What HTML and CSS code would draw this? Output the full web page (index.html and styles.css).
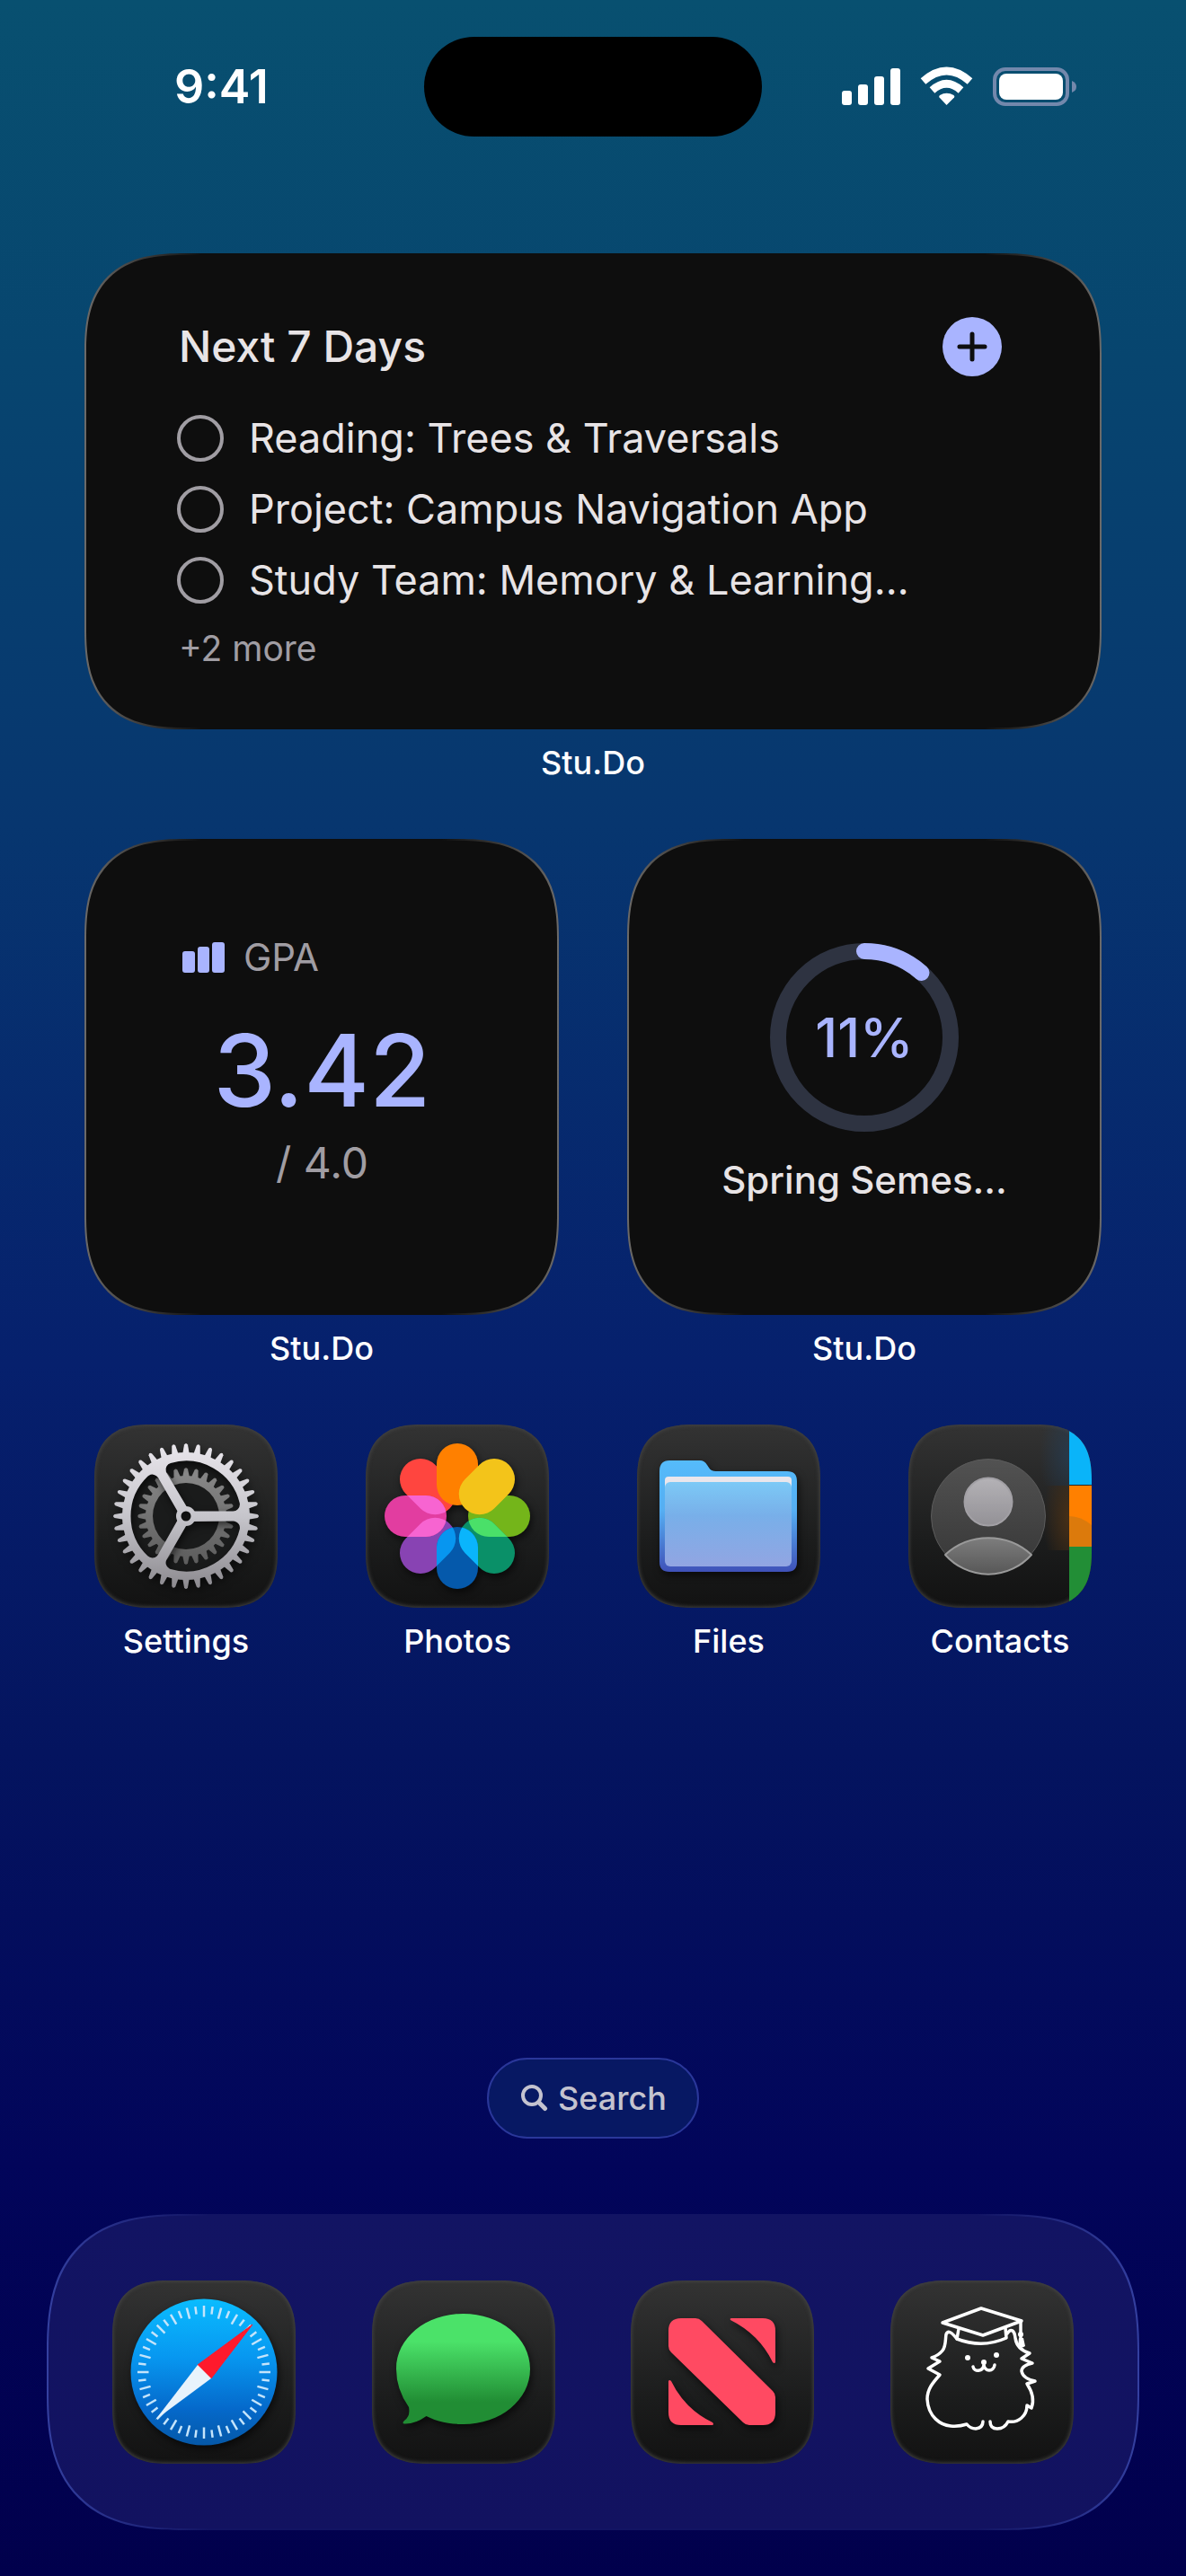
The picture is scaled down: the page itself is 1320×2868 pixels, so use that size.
FILE: index.html
```html
<!DOCTYPE html>
<html lang="en">
<head>
<meta charset="utf-8">
<meta name="viewport" content="width=device-width, initial-scale=1">
<title>Home Screen</title>
<link rel="stylesheet" href="styles.css">
</head>
<body>
<div class="screen">
  <header class="status">
    <time class="status-time">9:41</time>
    <div class="island"></div>
    <svg class="status-icons" width="264" height="46" viewBox="0 0 264 46" role="img" aria-label="Signal, Wi-Fi, battery">
      <g fill="#fff">
        <rect x="1" y="27" width="11" height="16" rx="3"/>
        <rect x="19" y="20" width="11" height="23" rx="3"/>
        <rect x="37" y="11" width="11" height="32" rx="3"/>
        <rect x="55" y="2" width="11" height="41" rx="3"/>
        <path d="M117.500 43 L109.500 34.500 Q108.500 33 110 32 Q117.500 27.500 125.500 32 Q127 33 126 34.500 Z"/>
        <rect x="176" y="8" width="71" height="29" rx="8"/>
      </g>
      <g fill="none" stroke="#fff" stroke-width="8.500">
        <path d="M91.500 16.500 Q117.500 -6.500 143.500 16.500"/>
        <path d="M101.500 26.500 Q117.500 12 133.500 26.500"/>
      </g>
      <rect x="171" y="3" width="81" height="39" rx="12" fill="none" stroke="#7388ac" stroke-width="4"/>
      <path d="M257 16 Q262 18 262 22.500 Q262 27 257 29 Z" fill="#7388ac"/>
    </svg>
  </header>

  <main class="home">
    <section class="tile wide">
      <div class="widget agenda">
        <div class="agenda-head">
          <h2>Next 7 Days</h2>
          <button class="add" type="button" aria-label="Add task">
            <svg width="66" height="66" viewBox="0 0 66 66"><path d="M33 19V47M19 33H47" stroke="#0e0e0e" stroke-width="5" stroke-linecap="round"/></svg>
          </button>
        </div>
        <ul class="tasks">
          <li><label><input type="checkbox"><span>Reading: Trees &amp; Traversals</span></label></li>
          <li><label><input type="checkbox"><span>Project: Campus Navigation App</span></label></li>
          <li><label><input type="checkbox"><span>Study Team: Memory &amp; Learning…</span></label></li>
        </ul>
        <p class="more">+2 more</p>
      </div>
      <p class="caption">Stu.Do</p>
    </section>

    <section class="tile half">
      <div class="widget gpa">
        <div class="gpa-head">
          <svg width="48" height="34" viewBox="0 0 48 34" fill="#a9b4ff"><rect y="10" width="14" height="24" rx="3"/><rect x="17" y="5" width="13" height="29" rx="3"/><rect x="33" width="14" height="34" rx="3"/></svg>
          <h2>GPA</h2>
        </div>
        <p class="gpa-value">3.42</p>
        <p class="gpa-scale">/ 4.0</p>
      </div>
      <p class="caption">Stu.Do</p>
    </section>

    <section class="tile half">
      <div class="widget term">
        <div class="ring">
          <svg width="210" height="210" viewBox="0 0 210 210" fill="none" stroke-width="18">
            <circle cx="105" cy="105" r="96" stroke="#2e3341"/>
            <circle cx="105" cy="105" r="96" stroke="#a9b4ff" stroke-linecap="round" pathLength="1000" stroke-dasharray="115 885" transform="rotate(-90 105 105)"/>
          </svg>
          <span class="ring-value">11%</span>
        </div>
        <h2>Spring Semes...</h2>
      </div>
      <p class="caption">Stu.Do</p>
    </section>

    <a class="tile app" href="#settings">
      <svg class="icon" viewBox="0 0 204 204">
        <defs>
          <linearGradient id="steel" gradientUnits="userSpaceOnUse" x1="0" y1="-81" x2="0" y2="81"><stop offset="0" stop-color="#e9e6ec"/><stop offset=".5" stop-color="#c6c5cb"/><stop offset="1" stop-color="#8b898e"/></linearGradient>
          <linearGradient id="iron" gradientUnits="userSpaceOnUse" x1="0" y1="-54" x2="0" y2="54"><stop offset="0" stop-color="#8a8a8a"/><stop offset="1" stop-color="#5c5c5c"/></linearGradient>
          <path id="tooth" d="M-4 -68L-2 -79.500Q0 -82.500 2 -79.500L4 -68Z"/>
          <g id="teeth3"><use href="#tooth"/><use href="#tooth" transform="rotate(10)"/><use href="#tooth" transform="rotate(20)"/></g>
          <g id="teeth9"><use href="#teeth3"/><use href="#teeth3" transform="rotate(30)"/><use href="#teeth3" transform="rotate(60)"/></g>
          <path id="cog" d="M-4 -43L-2 -52.500Q0 -55 2 -52.500L4 -43Z"/>
          <g id="cogs7"><use href="#cog"/><use href="#cog" transform="rotate(12.860)"/><use href="#cog" transform="rotate(25.710)"/><use href="#cog" transform="rotate(38.570)"/><use href="#cog" transform="rotate(51.430)"/><use href="#cog" transform="rotate(64.290)"/><use href="#cog" transform="rotate(77.140)"/></g>
          <path id="opening" d="M8 -13L52.400 -13A54 54 0 0 0 -15 -51.900Z"/>
          <mask id="wheel" maskUnits="userSpaceOnUse" x="-90" y="-90" width="180" height="180">
            <g fill="#fff"><circle r="71"/><use href="#teeth9"/><use href="#teeth9" transform="rotate(90)"/><use href="#teeth9" transform="rotate(180)"/><use href="#teeth9" transform="rotate(270)"/></g>
            <g stroke="#000" stroke-width="15" stroke-linejoin="round"><use href="#opening"/><use href="#opening" transform="rotate(120)"/><use href="#opening" transform="rotate(240)"/></g>
            <circle r="11" fill="#fff"/><circle r="5.500"/>
          </mask>
          <mask id="pinion" maskUnits="userSpaceOnUse" x="-60" y="-60" width="120" height="120">
            <g fill="#fff"><circle r="45"/><use href="#cogs7"/><use href="#cogs7" transform="rotate(90)"/><use href="#cogs7" transform="rotate(180)"/><use href="#cogs7" transform="rotate(270)"/></g>
            <circle r="37"/>
          </mask>
        </defs>
        <g transform="translate(102 102)">
          <circle r="63" fill="#1a1b1b"/>
          <rect x="-60" y="-60" width="120" height="120" fill="url(#iron)" mask="url(#pinion)"/>
          <g class="lifted"><rect x="-90" y="-90" width="180" height="180" fill="url(#steel)" mask="url(#wheel)"/></g>
        </g>
      </svg>
      <span class="caption">Settings</span>
    </a>

    <a class="tile app" href="#photos">
      <svg class="icon" viewBox="0 0 204 204">
        <defs>
          <rect id="petal" x="-23" y="-81" width="46" height="69" rx="23"/>
          <clipPath id="clip-teal"><use href="#petal" transform="rotate(135)"/></clipPath>
          <clipPath id="clip-purple"><use href="#petal" transform="rotate(225)"/></clipPath>
          <clipPath id="clip-pink"><use href="#petal" transform="rotate(270)"/></clipPath>
        </defs>
        <g transform="translate(102 102)">
          <g class="lifted">
            <use href="#petal" transform="rotate(315)" fill="#ff453f"/>
            <use href="#petal" transform="rotate(90)" fill="#74b51a"/>
            <use href="#petal" transform="rotate(135)" fill="#0a9068"/>
            <use href="#petal" transform="rotate(225)" fill="#8843b3"/>
            <use href="#petal" transform="rotate(180)" fill="#0559ab"/>
            <use href="#petal" transform="rotate(270)" fill="#e23da0"/>
            <use href="#petal" fill="#ff8000"/>
            <use href="#petal" transform="rotate(45)" fill="#f3c41a"/>
          </g>
          <g clip-path="url(#clip-teal)"><use href="#petal" transform="rotate(90)" fill="#4ae069"/><use href="#petal" transform="rotate(180)" fill="#0ab5fc"/></g>
          <g clip-path="url(#clip-purple)"><use href="#petal" transform="rotate(180)" fill="#0796f0"/><use href="#petal" transform="rotate(270)" fill="#f764d1"/></g>
          <g clip-path="url(#clip-pink)"><use href="#petal" transform="rotate(315)" fill="#f764d1"/></g>
        </g>
      </svg>
      <span class="caption">Photos</span>
    </a>

    <a class="tile app" href="#files">
      <svg class="icon" viewBox="0 0 204 204">
        <defs>
          <linearGradient id="folder-back" x2="0" y2="1"><stop offset="0" stop-color="#55bbfb"/><stop offset=".45" stop-color="#55aef2"/><stop offset="1" stop-color="#3f51b8"/></linearGradient>
          <linearGradient id="folder-front" x2="0" y2="1"><stop offset="0" stop-color="#7cc9f6"/><stop offset=".4" stop-color="#78afe9"/><stop offset="1" stop-color="#92a5e2"/></linearGradient>
        </defs>
        <path class="lifted" d="M25 52Q25 40 36 40H70Q75 40 78 45L80 48Q82 52 88 52H167Q178 52 178 63V153Q178 164 167 164H36Q25 164 25 153Z" fill="url(#folder-back)"/>
        <rect x="31" y="58" width="141" height="14" rx="4" fill="#eae6ec"/>
        <rect x="31" y="64" width="141" height="94" rx="6" fill="url(#folder-front)"/>
      </svg>
      <span class="caption">Files</span>
    </a>

    <a class="tile app" href="#contacts">
      <svg class="icon" viewBox="0 0 204 204">
        <defs>
          <linearGradient id="disc" x2="0" y2="1"><stop offset="0" stop-color="#525252"/><stop offset="1" stop-color="#363636"/></linearGradient>
          <linearGradient id="head" x2="0" y2="1"><stop offset="0" stop-color="#b4b2b6"/><stop offset="1" stop-color="#939196"/></linearGradient>
          <linearGradient id="bust" x2="0" y2="1"><stop offset="0" stop-color="#7d7d7d"/><stop offset="1" stop-color="#575757"/></linearGradient>
          <radialGradient id="glow-blue" cx="1" cy=".5" r="1"><stop offset="0" stop-color="#24405c" stop-opacity=".6"/><stop offset="1" stop-color="#24405c" stop-opacity="0"/></radialGradient>
          <radialGradient id="glow-orange" cx="1" cy=".5" r="1"><stop offset="0" stop-color="#4a3015" stop-opacity=".9"/><stop offset="1" stop-color="#4a3015" stop-opacity="0"/></radialGradient>
        </defs>
        <rect x="146" y="2" width="33" height="66" fill="url(#glow-blue)"/>
        <rect x="150" y="68" width="29" height="72" fill="url(#glow-orange)"/>
        <circle cx="89" cy="102" r="63.500" fill="url(#disc)" stroke="#5c5c5c"/>
        <circle cx="89" cy="86" r="26.500" fill="url(#head)" stroke="#a2a0a5" stroke-width="2"/>
        <path d="M41 145A71 71 0 0 1 137 145A64 64 0 0 1 41 145Z" fill="url(#bust)" stroke="#9a9a9a" stroke-width="2" stroke-linejoin="round"/>
        <path d="M179 0H204V67H179Z" fill="#0ab4f9"/>
        <path d="M179 68H204V136H179Z" fill="#ff8000"/>
        <path d="M179 102Q192 102 204 112V136H179Z" fill="#dc7a0c"/>
        <path d="M179 136H204V204H179Z" fill="#228e36"/>
      </svg>
      <span class="caption">Contacts</span>
    </a>
  </main>

  <footer class="bottom">
    <button class="search" type="button">
      <svg width="30" height="30" viewBox="0 0 30 30" fill="none" stroke="currentColor" stroke-width="4" stroke-linecap="round"><circle cx="12" cy="12" r="10"/><path d="M19.500 19.500L26.500 26.500" stroke-width="5"/></svg>
      <span>Search</span>
    </button>

    <nav class="dock" aria-label="Dock">
      <a href="#safari" aria-label="Safari">
        <svg class="icon" viewBox="0 0 204 204">
          <defs>
            <linearGradient id="sky" x2="0" y2="1"><stop offset="0" stop-color="#0abcff"/><stop offset=".4" stop-color="#0797f0"/><stop offset=".75" stop-color="#0569cb"/><stop offset="1" stop-color="#0558a8"/></linearGradient>
            <g id="ticks2"><path d="M0 -74V-61.500"/><path d="M0 -73.500V-65" transform="rotate(7.500)"/></g>
            <g id="ticks6"><use href="#ticks2"/><use href="#ticks2" transform="rotate(15)"/><use href="#ticks2" transform="rotate(30)"/></g>
            <g id="ticks12"><use href="#ticks6"/><use href="#ticks6" transform="rotate(45)"/></g>
          </defs>
          <g transform="translate(102 102)">
            <circle class="lifted" r="81.500" fill="url(#sky)"/>
            <g stroke="#c4e4fb" stroke-width="2.500"><use href="#ticks12"/><use href="#ticks12" transform="rotate(90)"/><use href="#ticks12" transform="rotate(180)"/><use href="#ticks12" transform="rotate(270)"/></g>
            <path d="M54 -53L8 7L-7 -8Z" fill="#ff1a2c" stroke="#ff1a2c" stroke-linejoin="round"/>
            <path d="M-54 53L8 7L-7 -8Z" fill="#e8f3fc"/>
          </g>
        </svg>
      </a>
      <a href="#messages" aria-label="Messages">
        <svg class="icon" viewBox="0 0 204 204">
          <defs><linearGradient id="lime" x2="0" y2="1"><stop offset=".25" stop-color="#4be269"/><stop offset=".8" stop-color="#218d34"/></linearGradient></defs>
          <path class="lifted" d="M101.500 37C143 37 176 64 176 98.500C176 133 143 160 101.500 160C86 160 72 157 60.500 151Q48 160 36 159.500Q33 159 36 156Q43 151 41 141Q27 121 27 98.500C27 64 60 37 101.500 37Z" fill="url(#lime)"/>
        </svg>
      </a>
      <a href="#news" aria-label="News">
        <svg class="icon" viewBox="0 0 204 204">
          <g class="lifted" fill="#ff4a62">
            <path d="M56 42H72Q76 42 79 45L158 123Q161 126 161 130V147Q161 161 147 161H132Q128 161 125 158L45 80Q42 77 42 73V56Q42 42 56 42Z"/>
            <path d="M112 42H147Q161 42 161 56V91Q160 93 158 91Q143 60 111 44Q110 42 112 42Z"/>
            <path d="M42 112V147Q42 161 56 161H91Q93 160 91 158Q60 143 45 112Q43 110 42 112Z"/>
          </g>
        </svg>
      </a>
      <a href="#studo" aria-label="Stu.Do">
        <svg class="icon" viewBox="0 0 204 204">
          <g fill="none" stroke="#fff" stroke-width="3.500" stroke-linecap="round" stroke-linejoin="round">
            <path d="M101 31L146 45L103 61L58 47Z"/>
            <path d="M76 54L74 65Q102 76 129 64L128 53"/>
            <path d="M145 46V68"/>
            <path d="M74 65Q65 53 62 60C61 66 62 73 58 78Q54 83 46 86L55 90L42 98L55 105C47 114 41 121 41 132C42 152 56 161 67 162Q76 163 85 160Q89 165 95 165Q103 164 103 157"/>
            <path d="M111 157C111 163 114 165 119 165C125 165 129 161 131 157C142 159 152 151 152 139L157 142C160 134 158 124 152 115L161 112C151 110 147 106 146 101C146 97 149 94 158 92L146 87L155 81C145 78 140 72 139 64C138 55 134 53 130 59"/>
            <path d="M92 96C93 102 103 102 104 94C105 102 115 102 116 94"/>
          </g>
          <g fill="#fff"><circle cx="86" cy="86" r="3"/><circle cx="118" cy="83" r="3"/><circle cx="104" cy="91" r="3"/><circle cx="145" cy="60" r="3"/><path d="M143 64H148L150 73Q146 76 142 73Z"/></g>
        </svg>
      </a>
    </nav>
  </footer>
</div>
</body>
</html>
```
FILE: styles.css
```css
* {
  box-sizing: border-box;
}

body {
  margin: 0;
  font-family: Inter, "Liberation Sans", sans-serif;
  color: #fff;
}

h2,
p,
ul {
  margin: 0;
  padding: 0;
  list-style: none;
}

a {
  color: inherit;
  text-decoration: none;
}

svg {
  display: block;
  flex: none;
}

.screen {
  display: flex;
  flex-direction: column;
  min-height: 100vh;
  background: linear-gradient(#085070 0%, #07456f 14%, #07366f 32%, #06206d 53%, #04145f 68%, #02055a 84%, #01004c 100%);
}

/* Status bar */
.status {
  display: grid;
  grid-template-columns: 1fr 376px 1fr;
  align-items: center;
  padding-top: 41px;
}

.status-time {
  padding-left: 194px;
  font-size: 52px;
  font-weight: 600;
  line-height: 64px;
}

.island {
  height: 111px;
  border-radius: 56px;
  background: #000;
}

.status-icons {
  justify-self: end;
  margin-right: 120px;
}

/* Home grid */
.home {
  display: grid;
  grid-template-columns: repeat(4, 1fr);
  gap: 64px 76px;
  padding: 130px 94px 0;
}

.tile {
  display: flex;
  flex-direction: column;
  align-items: center;
}

.wide {
  grid-column: span 4;
}

.half {
  grid-column: span 2;
}

.caption {
  margin-top: 16px;
  font-size: 36px;
  font-weight: 500;
  line-height: 42px;
}

.widget {
  align-self: stretch;
  flex: 1;
  border: 2px solid transparent;
  border-radius: 90px;
  background:
    linear-gradient(#0e0e0e, #0e0e0e) padding-box,
    linear-gradient(90deg, #6c6a68, #0e0e0e 130px, #0e0e0e calc(100% - 130px), #6c6a68) border-box;
  color: #e8e4e6;
}

.agenda {
  padding: 69px 109px 64px 101px;
}

.agenda-head {
  display: flex;
  align-items: center;
  justify-content: space-between;
  padding-left: 2px;
}

.agenda-head h2 {
  font-size: 48px;
  font-weight: 500;
  line-height: 58px;
}

.add {
  padding: 0;
  border: 0;
  border-radius: 50%;
  background: #a9b4ff;
}

.tasks {
  display: flex;
  flex-direction: column;
  gap: 27px;
  margin-top: 43px;
}

.tasks label {
  display: flex;
  align-items: center;
  gap: 28px;
  font-size: 45px;
  line-height: 52px;
}

.tasks input {
  appearance: none;
  width: 52px;
  height: 52px;
  margin: 0;
  border: 4px solid #a09da3;
  border-radius: 50%;
}

.more {
  margin-top: 26px;
  padding-left: 2px;
  color: #a09da3;
  font-size: 39px;
  line-height: 48px;
}

.gpa {
  padding: 104px 106px 138px 107px;
}

.gpa-head {
  display: flex;
  align-items: center;
  gap: 20px;
}

.gpa-head h2 {
  color: #a09da3;
  font-size: 42px;
  font-weight: 400;
  line-height: 52px;
}

.gpa-value {
  margin-top: 32px;
  color: #a9b4ff;
  font-size: 111px;
  font-weight: 500;
  line-height: 136px;
  text-align: center;
}

.gpa-scale {
  margin-top: 6px;
  color: #a09da3;
  font-size: 48px;
  line-height: 58px;
  text-align: center;
}

.term {
  display: flex;
  flex-direction: column;
  align-items: center;
  padding: 114px 80px 120px;
}

.ring {
  display: grid;
  place-items: center;
}

.ring > * {
  grid-area: 1 / 1;
}

.ring-value {
  color: #a9b4ff;
  font-size: 60px;
  font-weight: 500;
  line-height: 72px;
}

.term h2 {
  margin-top: 28px;
  font-size: 42px;
  font-weight: 500;
  line-height: 52px;
}

/* App icons */
.icon {
  width: 204px;
  height: 204px;
  border-radius: 52px;
  background: linear-gradient(#333, #1b1c1c 65%, #121212);
  box-shadow: inset 0 0 4px 1px #444;
  overflow: hidden;
}

.lifted {
  filter: drop-shadow(2px 4px 4px rgba(0, 0, 0, 0.6));
}

/* Search and dock */
.bottom {
  display: flex;
  flex-direction: column;
  align-items: center;
  gap: 84px;
  margin-top: auto;
  padding: 0 52px 51px;
}

.search {
  display: flex;
  align-items: center;
  gap: 11px;
  padding: 22px 34px 22px 36px;
  border: 2px solid #2a379a;
  border-radius: 45px;
  background: #071863;
  color: #c4c3cf;
  font: 500 36px/42px Inter, "Liberation Sans", sans-serif;
}

.dock {
  display: flex;
  justify-content: space-between;
  align-self: stretch;
  padding: 72px 71px;
  border: 2px solid transparent;
  border-radius: 124px;
  background:
    linear-gradient(#121463, #121260) padding-box,
    linear-gradient(90deg, #3440a0, #121463 180px, #121463 calc(100% - 180px), #3440a0) border-box;
}

@supports (corner-shape: superellipse(1.4)) {
  .widget,
  .icon,
  .dock {
    corner-shape: superellipse(1.4);
  }

  .widget {
    border-radius: 112px;
  }

  .icon {
    border-radius: 64px;
  }

  .dock {
    border-radius: 154px;
  }
}
```
